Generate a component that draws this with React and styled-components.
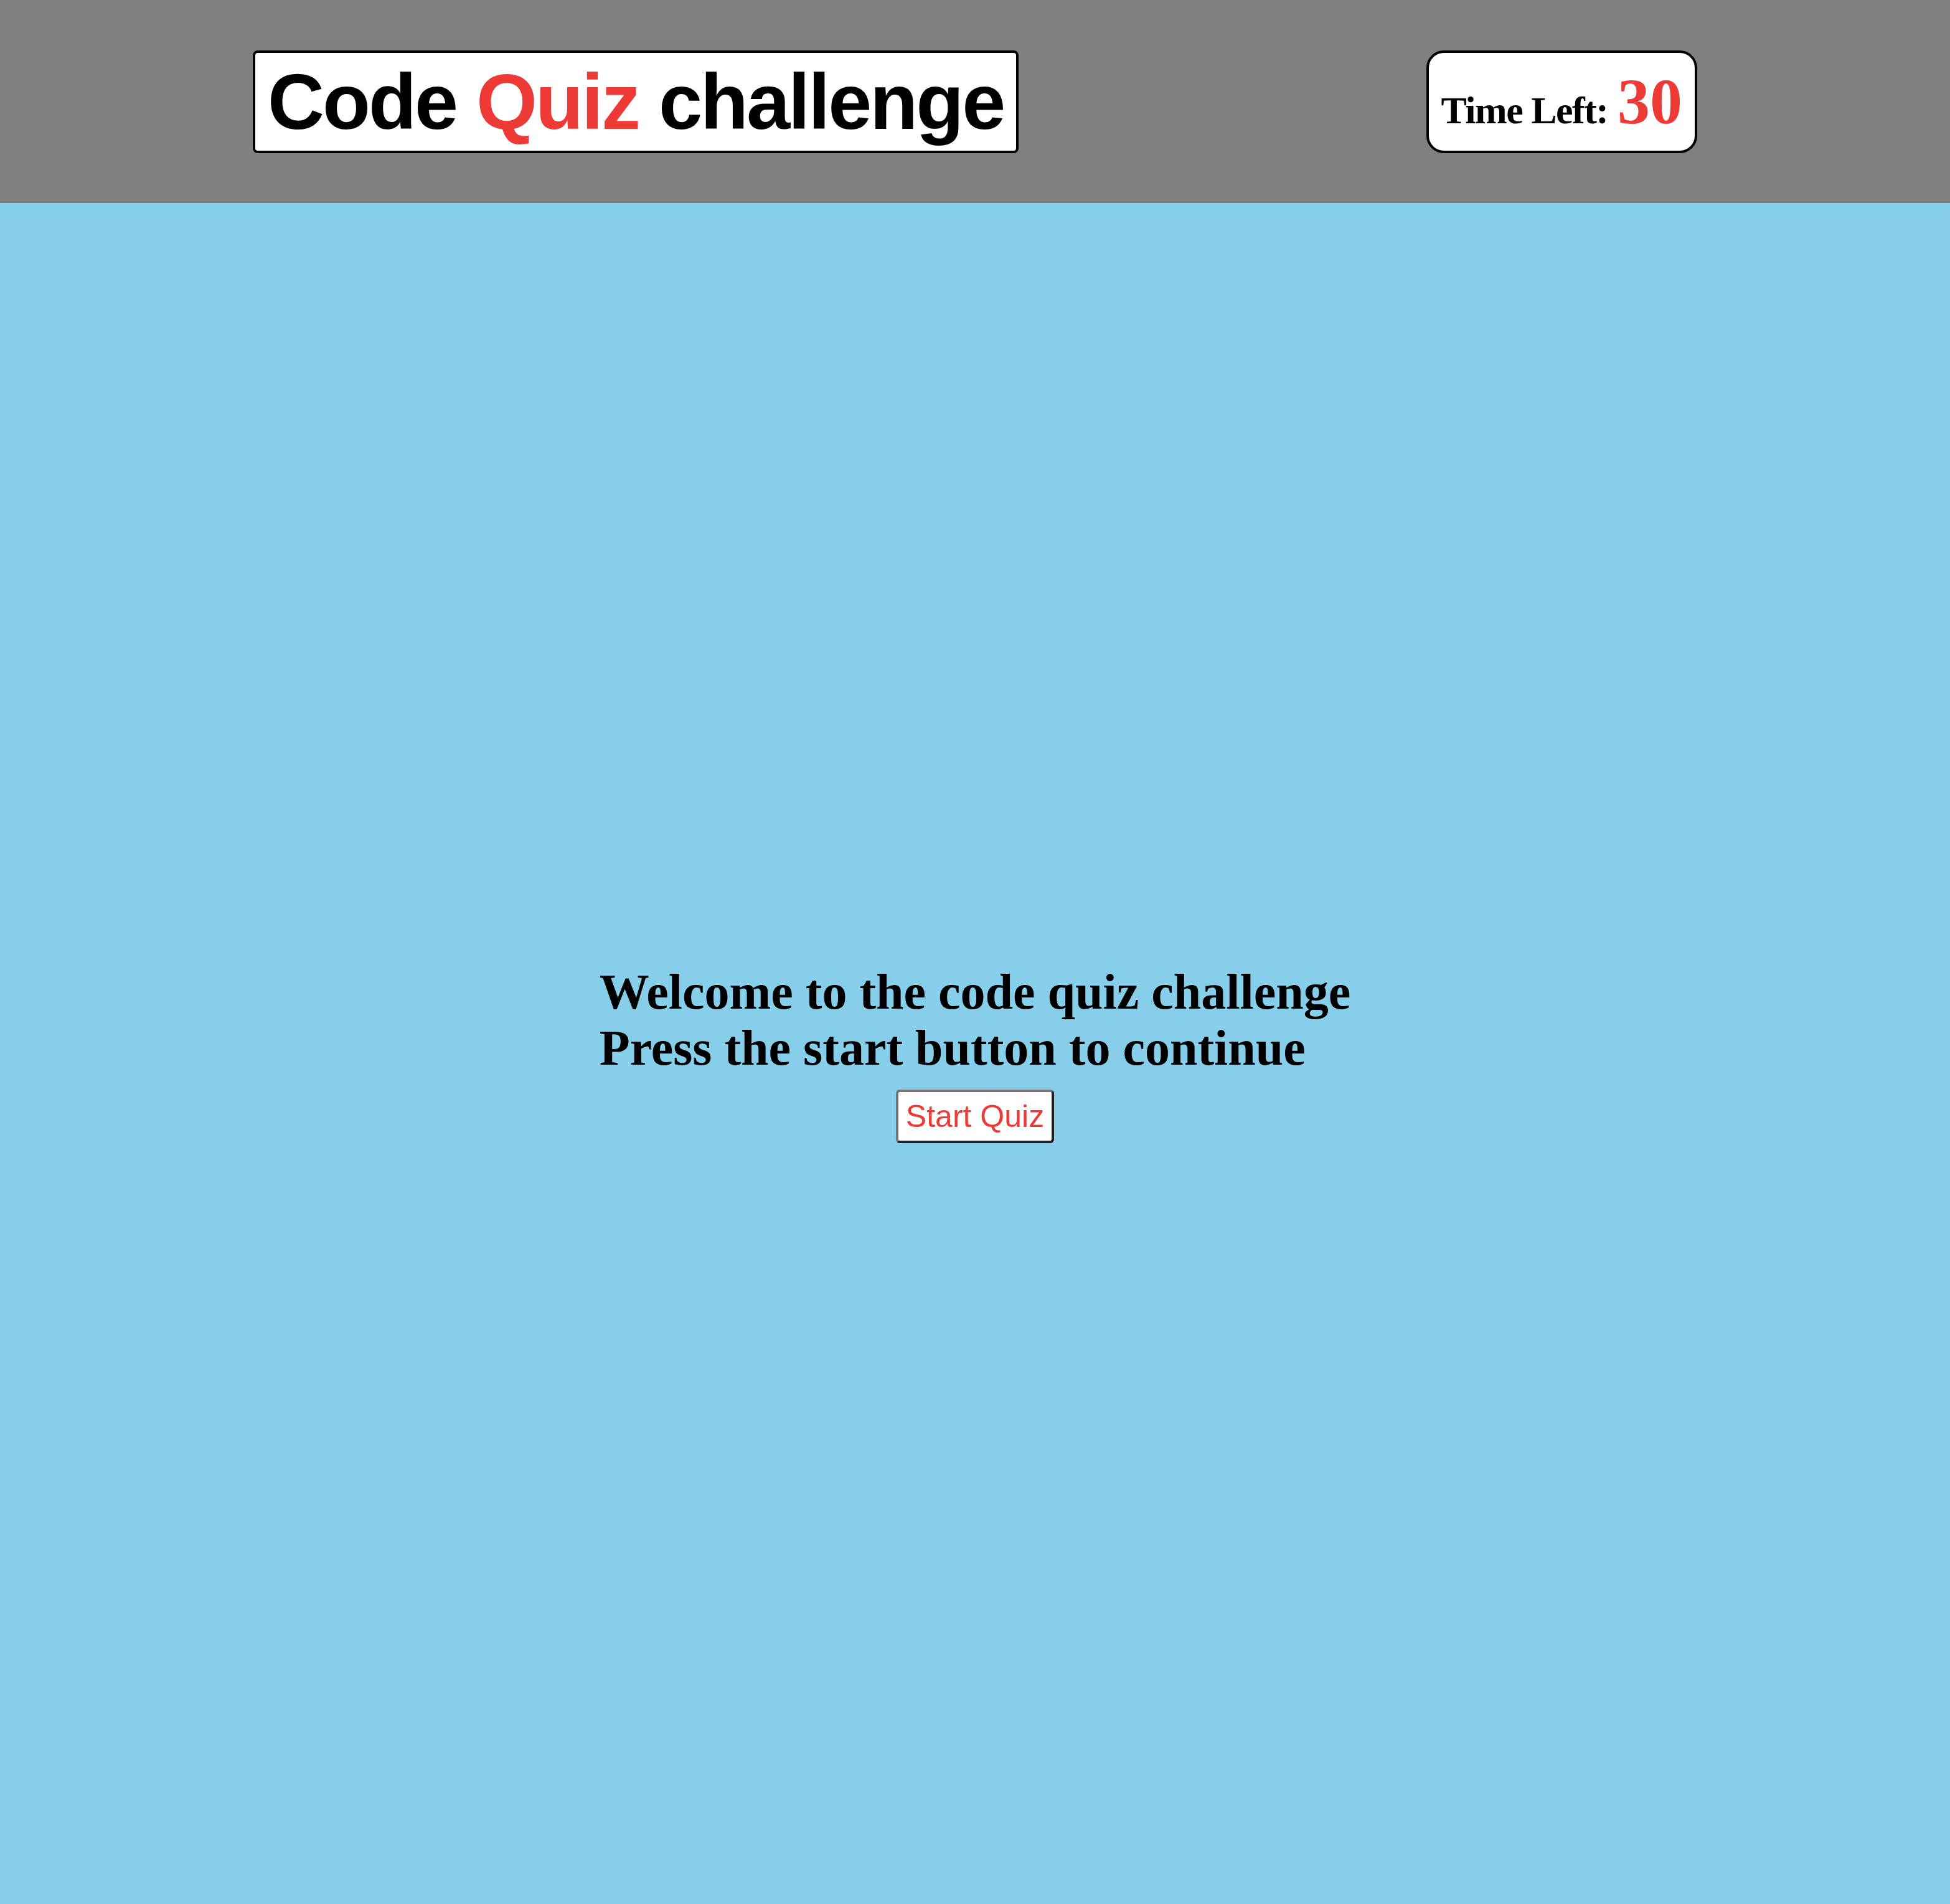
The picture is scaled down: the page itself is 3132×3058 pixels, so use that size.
import React from "react";
import styled, { createGlobalStyle } from "styled-components";

const GlobalStyle = createGlobalStyle`
  html, body {
    margin: 0;
    padding: 0;
  }
  body {
    font-family: "Liberation Serif", "Times New Roman", serif;
    background: #87ceeb;
  }
`;

const RED = "#ee3a36";

const Page = styled.div`
  min-height: 100vh;
  display: flex;
  flex-direction: column;
`;

const Header = styled.header`
  height: 326px;
  box-sizing: border-box;
  background: #808080;
  display: flex;
  align-items: center;
  justify-content: space-between;
  padding: 0 406px;
`;

const Title = styled.h1`
  margin: 0;
  background: #ffffff;
  border: 4px solid #000000;
  border-radius: 8px;
  padding: 0 20px;
  font-family: "Liberation Sans", Arial, Helvetica, sans-serif;
  font-weight: bold;
  font-size: 126px;
  line-height: 157px;
  letter-spacing: -3px;
  color: #000000;
  white-space: nowrap;
`;

const Accent = styled.span`
  color: ${RED};
`;

const Timer = styled.div`
  height: 165px;
  box-sizing: border-box;
  background: #ffffff;
  border: 4px solid #000000;
  border-radius: 28px;
  padding: 0 20px;
  display: flex;
  align-items: center;
  font-family: "Liberation Serif", "Times New Roman", serif;
  font-weight: bold;
  color: #000000;
`;

const TimerText = styled.p`
  margin: 0;
  font-size: 62px;
  line-height: 1;
  white-space: nowrap;
`;

const TimerLabel = styled.span`
  letter-spacing: -1.5px;
`;

const TimerCount = styled.span`
  font-size: 104px;
  color: ${RED};
`;

const Main = styled.main`
  flex: 1;
  background: #87ceeb;
  display: flex;
  align-items: center;
  justify-content: center;
`;

const Intro = styled.section`
  display: flex;
  flex-direction: column;
  align-items: center;
`;

const Message = styled.h2`
  margin: 0;
  font-family: "Liberation Serif", "Times New Roman", serif;
  font-weight: bold;
  font-size: 80px;
  line-height: 90px;
  color: #000000;
  text-align: left;
  white-space: nowrap;
`;

const MessageLine = styled.span`
  display: block;
`;

const StartButton = styled.button`
  margin-top: 22px;
  background: #ffffff;
  color: ${RED};
  font-family: "Liberation Sans", Arial, Helvetica, sans-serif;
  font-size: 50px;
  line-height: 57px;
  padding: 10.5px 12px;
  border-width: 4px;
  border-style: solid;
  border-color: #767676 #222222 #222222 #767676;
  border-radius: 6px;
  cursor: pointer;
`;

export default function App() {
  return (
    <>
      <GlobalStyle />
      <Page>
        <Header>
          <Title>
            Code <Accent>Quiz</Accent> challenge
          </Title>
          <Timer>
            <TimerText>
              <TimerLabel>Time Left:</TimerLabel> <TimerCount>30</TimerCount>
            </TimerText>
          </Timer>
        </Header>
        <Main>
          <Intro>
            <Message>
              <MessageLine>Welcome to the code quiz challenge</MessageLine>
              <MessageLine>Press the start button to continue</MessageLine>
            </Message>
            <StartButton type="button">Start Quiz</StartButton>
          </Intro>
        </Main>
      </Page>
    </>
  );
}
